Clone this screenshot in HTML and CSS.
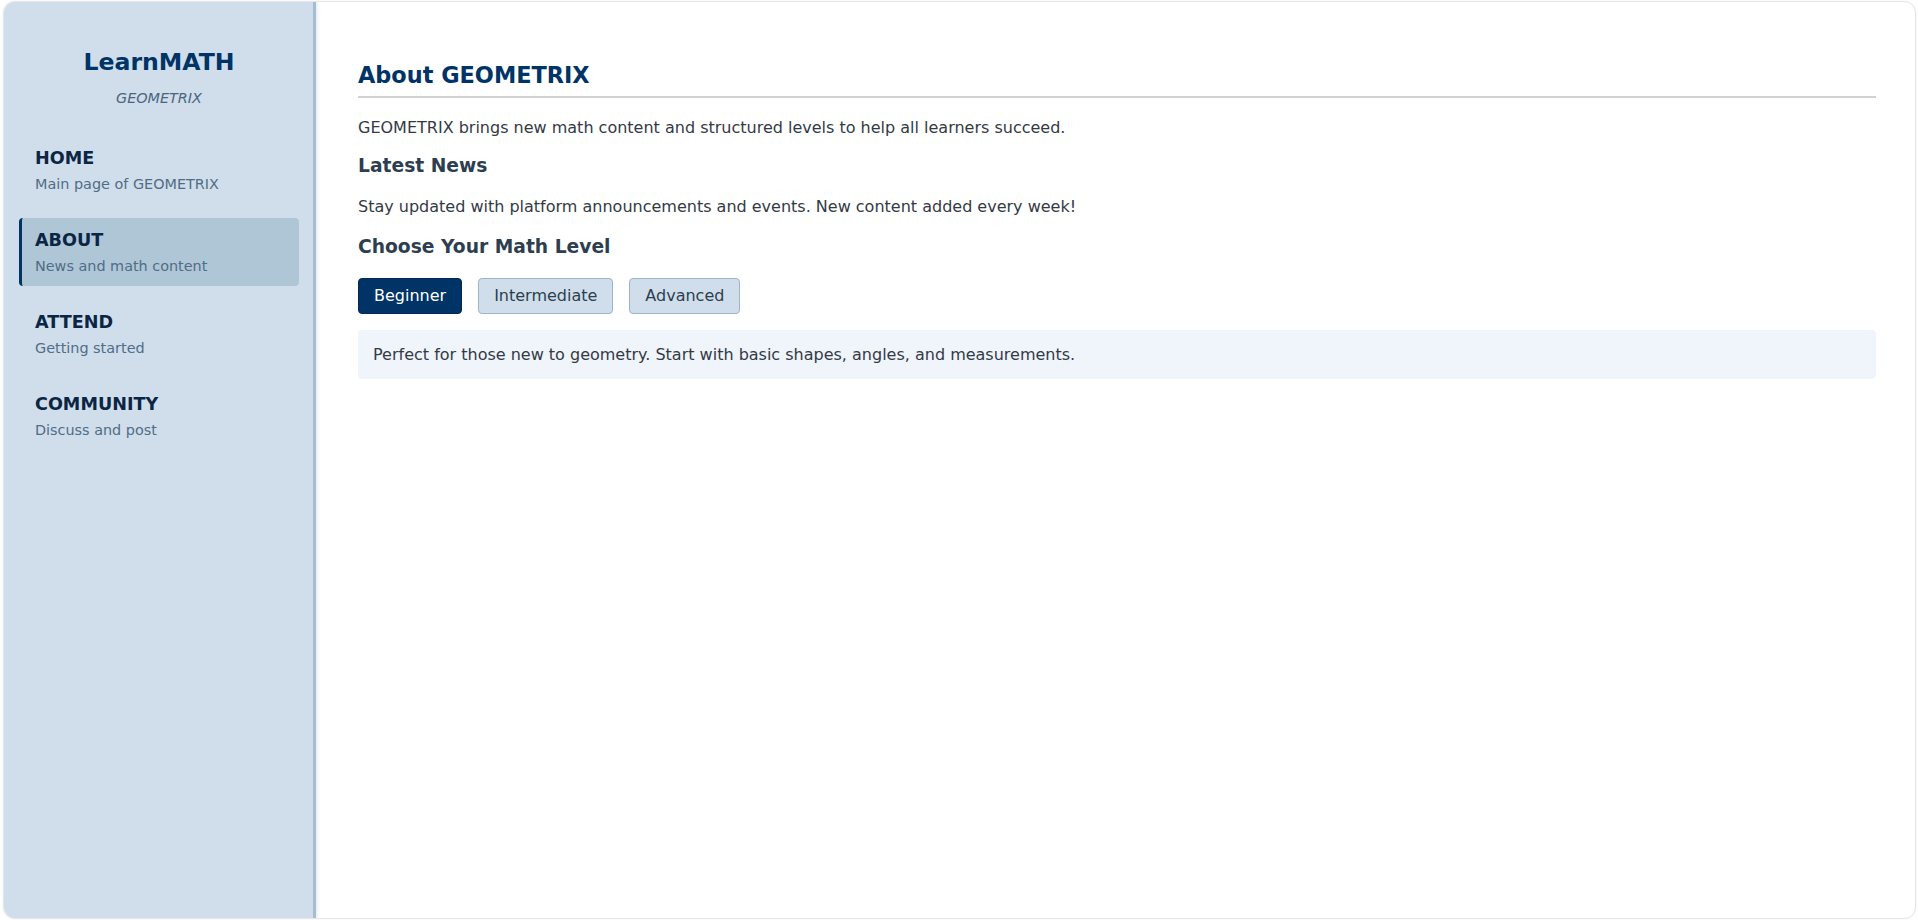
FILE: index.html
```html
<!DOCTYPE html>
<html lang="en">
<head>
<meta charset="utf-8">
<title>LearnMATH - GEOMETRIX</title>
<link rel="stylesheet" href="styles.css">
</head>
<body>
<div class="app">
  <aside class="sidebar">
    <div class="logo">
      <h1 class="logo-title">LearnMATH</h1>
      <div class="logo-tag">GEOMETRIX</div>
    </div>
    <nav class="nav">
      <a class="nav-item" href="#">
        <span class="nav-title">HOME</span>
        <span class="nav-sub">Main page of GEOMETRIX</span>
      </a>
      <a class="nav-item active" href="#">
        <span class="nav-title">ABOUT</span>
        <span class="nav-sub">News and math content</span>
      </a>
      <a class="nav-item" href="#">
        <span class="nav-title">ATTEND</span>
        <span class="nav-sub">Getting started</span>
      </a>
      <a class="nav-item" href="#">
        <span class="nav-title">COMMUNITY</span>
        <span class="nav-sub">Discuss and post</span>
      </a>
    </nav>
  </aside>
  <main class="main">
    <h2 class="page-title">About GEOMETRIX</h2>
    <p class="text">GEOMETRIX brings new math content and structured levels to help all learners succeed.</p>
    <h3 class="section-title news-title">Latest News</h3>
    <p class="text">Stay updated with platform announcements and events. New content added every week!</p>
    <h3 class="section-title level-title">Choose Your Math Level</h3>
    <div class="levels">
      <button class="level-btn selected">Beginner</button>
      <button class="level-btn">Intermediate</button>
      <button class="level-btn">Advanced</button>
    </div>
    <div class="level-info">Perfect for those new to geometry. Start with basic shapes, angles, and measurements.</div>
  </main>
</div>
</body>
</html>
```

FILE: styles.css
```css
* { box-sizing: border-box; }
html, body { margin: 0; padding: 0; background: #ffffff; }
body {
  font-family: "DejaVu Sans", Verdana, sans-serif;
  font-size: 16px;
  color: #333a45;
  padding: 1px 2px 1px 3px;
  height: 920px;
}
.app {
  display: flex;
  height: 918px;
  border: 1px solid #e6e6e6;
  border-radius: 12px;
  overflow: hidden;
  box-shadow: 0 0 3px rgba(0,0,0,0.06);
  background: #fff;
}
.sidebar {
  width: 312px;
  flex: 0 0 312px;
  background: #cfdeea;
  border-right: 3px solid #a3bdd1;
  box-shadow: 2px 0 3px rgba(0,0,0,0.07);
  padding: 46px 14px 20px 15px;
  position: relative;
  z-index: 1;
}
.logo { text-align: center; margin-bottom: 29px; }
.logo-title {
  margin: 0;
  font-size: 23.6px;
  line-height: 28px;
  font-weight: bold;
  color: #003366;
}
.logo-tag {
  margin-top: 14px;
  font-size: 14.4px;
  line-height: 17px;
  font-style: italic;
  color: #4a6580;
}
.nav { display: flex; flex-direction: column; gap: 14px; }
.nav-item {
  display: flex;
  flex-direction: column;
  text-decoration: none;
  padding: 12px 13px 11px 13px;
  border-left: 3px solid transparent;
  border-radius: 4px;
  height: 68px;
}
.nav-item.active {
  background: #afc6d6;
  border-left-color: #003366;
}
.nav-title {
  font-size: 17.6px;
  line-height: 20px;
  font-weight: bold;
  color: #0b2545;
}
.nav-sub {
  margin-top: 8px;
  font-size: 14.4px;
  line-height: 17px;
  color: #4f6d88;
}
.main {
  flex: 1;
  padding: 60px 39px 40px 42px;
}
.page-title {
  margin: 0 0 20px 0;
  font-size: 22.4px;
  line-height: 26px;
  font-weight: bold;
  color: #003366;
  padding-bottom: 8px;
  border-bottom: 2px solid #d2d2d2;
}
.text {
  margin: 0;
  line-height: 19px;
}
.section-title {
  font-size: 18.7px;
  line-height: 22px;
  font-weight: bold;
  color: #2c3e50;
}
.news-title { margin: 18px 0 20px 0; }
.level-title { margin: 20px 0 22px 0; }
.levels { display: flex; gap: 16px; margin-top: -2px; }
.level-btn {
  font-family: "DejaVu Sans", Verdana, sans-serif;
  font-size: 16px;
  line-height: 18px;
  padding: 8px 15px;
  border: 1px solid #9db5c9;
  border-radius: 4px;
  background: #cfdeea;
  color: #2c3e50;
  cursor: pointer;
}
.level-btn.selected {
  background: #003366;
  border-color: #002a55;
  color: #ffffff;
}
.level-info {
  margin-top: 16px;
  background: #f0f4fb;
  border-radius: 4px;
  padding: 15px 15px;
  line-height: 19px;
}
```
